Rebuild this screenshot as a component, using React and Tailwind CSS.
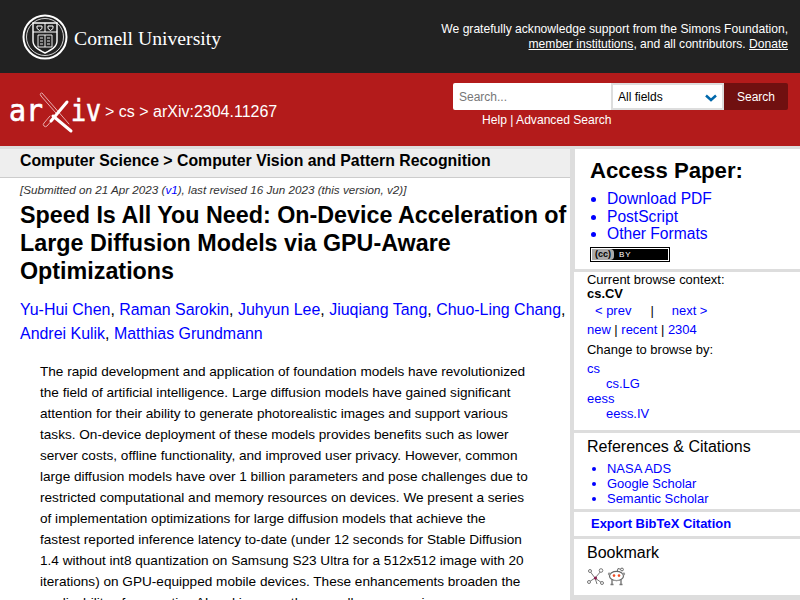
const SANS = { fontFamily: '"Liberation Sans", Arial, sans-serif' }

const AUTHORS = [
  'Yu-Hui Chen',
  'Raman Sarokin',
  'Juhyun Lee',
  'Jiuqiang Tang',
  'Chuo-Ling Chang',
  'Andrei Kulik',
  'Matthias Grundmann',
]

const ABSTRACT = [
  'The rapid development and application of foundation models have revolutionized',
  'the field of artificial intelligence. Large diffusion models have gained significant',
  'attention for their ability to generate photorealistic images and support various',
  'tasks. On-device deployment of these models provides benefits such as lower',
  'server costs, offline functionality, and improved user privacy. However, common',
  'large diffusion models have over 1 billion parameters and pose challenges due to',
  'restricted computational and memory resources on devices. We present a series',
  'of implementation optimizations for large diffusion models that achieve the',
  'fastest reported inference latency to-date (under 12 seconds for Stable Diffusion',
  '1.4 without int8 quantization on Samsung S23 Ultra for a 512x512 image with 20',
  'iterations) on GPU-equipped mobile devices. These enhancements broaden the',
  'applicability of generative AI and improve the overall user experience',
]

function CornellSeal() {
  return (
    <svg width="46" height="46" viewBox="0 0 46 46" fill="none" stroke="#fff">
      <circle cx="23" cy="23" r="21.5" strokeWidth="2" />
      <circle cx="23" cy="23" r="18.5" strokeWidth="0.8" />
      <path d="M11 9h24v18c0 6-6 9-12 12-6-3-12-6-12-12z" strokeWidth="1.4" />
      <path d="M11 18h24M23 9v9" strokeWidth="1" />
      <path d="M15 12h5v2.5l-2.5 2-2.5-2zM26 12h5v2.5l-2.5 2-2.5-2z" strokeWidth="1" />
      <path d="M16 21h14v12h-14zM23 21v12M18 24h3M18 27h3M18 30h3M25 24h3M25 27h3M25 30h3" strokeWidth="0.9" />
    </svg>
  )
}

function ArxivLogo() {
  return (
    <svg width="108" height="44" viewBox="0 0 108 44">
      <g fill="none" strokeLinecap="round">
        <path d="M42 3l27 31" strokeWidth="1" stroke="#e8b0b0" />
        <path d="M41 6l15 17" strokeWidth="1" stroke="#e8b0b0" />
        <path d="M41 3a2 2 0 0 0 0 3" strokeWidth="1" stroke="#e8b0b0" />
        <path d="M50 26l-6 7a2 2 0 0 0 3 3l7-8" strokeWidth="1" stroke="#e8b0b0" />
        <path d="M67 12l-16 19" strokeWidth="3" stroke="#fff" />
        <path d="M53 26l18 15" strokeWidth="3" stroke="#fff" />
      </g>
      <text x="9" y="31" textLength="34" lengthAdjust="spacingAndGlyphs" fontFamily="'DejaVu Sans Mono', monospace" fontSize="30" fill="#fff" stroke="#fff" strokeWidth="0.7">ar</text>
      <text x="71" y="31" textLength="30" lengthAdjust="spacingAndGlyphs" fontFamily="'DejaVu Sans Mono', monospace" fontSize="30" fill="#fff" stroke="#fff" strokeWidth="0.7">iv</text>
    </svg>
  )
}

function CcBadge() {
  return (
    <div className="mt-[4px] h-[15px] w-[80px] border border-black">
      <div className="flex h-full items-center border border-white bg-black">
        <span className="flex h-full w-[22px] items-center justify-center rounded-r-[4px] bg-[#aaa] text-[9px] leading-none font-bold text-black">(cc)</span>
        <span className="pl-[5px] text-[8px] leading-none tracking-[1px] text-white">BY</span>
      </div>
    </div>
  )
}

function BibsonomyIcon() {
  return (
    <svg width="17" height="17" viewBox="0 0 17 17" fill="none" stroke="#777" strokeWidth="1">
      <path d="M2 2l6 8 7 5M15 2l-7 8-6 4M8 10l2 6" />
      <circle cx="3" cy="3" r="1.5" fill="#fff" />
      <circle cx="14" cy="2.5" r="1.8" fill="#fff" />
      <circle cx="2" cy="14" r="1.5" fill="#fff" />
      <circle cx="15" cy="15" r="1.5" fill="#fff" />
      <circle cx="8.5" cy="10" r="1.6" fill="#8a2050" stroke="none" />
    </svg>
  )
}

function RedditIcon() {
  return (
    <svg width="19" height="19" viewBox="0 0 19 19" fill="none">
      <path d="M10 5l1-3.5 3.5 1" stroke="#666" strokeWidth="1" />
      <circle cx="15" cy="2.5" r="1.4" stroke="#666" fill="#fff" />
      <ellipse cx="9.5" cy="9" rx="7" ry="4.6" fill="#fff" stroke="#666" strokeWidth="1.2" />
      <circle cx="2.2" cy="7" r="1.4" fill="#999" />
      <circle cx="16.8" cy="7" r="1.4" fill="#999" />
      <circle cx="7" cy="8.6" r="1.3" fill="#f04a20" />
      <circle cx="12" cy="8.6" r="1.3" fill="#f04a20" />
      <path d="M5 13v4M14 13v4M3.5 17.5h3M12.5 17.5h3" stroke="#777" strokeWidth="1.4" />
      <path d="M6 13.5h7" stroke="#999" strokeWidth="1" />
    </svg>
  )
}

function Panel({ className = '', children }) {
  return <div className={`bg-white ${className}`}>{children}</div>
}

export default function App() {
  return (
    <div className="h-[600px] w-[800px] overflow-hidden bg-white text-black" style={SANS}>
      <header className="flex h-[73px] items-start justify-between bg-[#222] pr-[12px]">
        <div className="flex items-center pt-[14px] pl-[22px]">
          <CornellSeal />
          <span className="mt-[4px] ml-[6px] text-[19.7px] leading-none text-white" style={{ fontFamily: '"Liberation Serif", serif' }}>Cornell University</span>
        </div>
        <p className="pt-[22px] text-right text-[12.1px] leading-[15px] text-white">
          We gratefully acknowledge support from the Simons Foundation,<br />
          <a className="underline">member institutions</a>, and all contributors. <a className="underline">Donate</a>
        </p>
      </header>

      <div className="flex h-[73px] items-start justify-between bg-[#b31b1b] pr-[12px]">
        <div className="flex items-start pt-[17px]">
          <ArxivLogo />
          <span className="mt-[10px] ml-[-3px] text-[16px] leading-[24px] text-white">&gt; cs &gt; arXiv:2304.11267</span>
        </div>
        <div className="pt-[10px]">
          <div className="flex h-[27px]">
            <input placeholder="Search..." className="h-full w-[158px] rounded-l-[2px] bg-white pl-[6px] text-[12px] outline-none placeholder:text-[#777]" />
            <div className="relative h-full w-[113px]">
              <select className="h-full w-full appearance-none border-2 border-[#ddd] bg-white pl-[5px] text-[12px] text-black outline-none">
                <option>All fields</option>
              </select>
              <svg className="absolute top-[11px] right-[7px]" width="12" height="8" viewBox="0 0 12 8" fill="none" stroke="#0068ac" strokeWidth="2.5">
                <path d="M1 1.5l5 4.5 5-4.5" />
              </svg>
            </div>
            <button className="h-full w-[64px] rounded-r-[2px] bg-[#701010] text-[12px] text-white">Search</button>
          </div>
          <div className="mt-[3px] pl-[29px] text-[12.1px] leading-[14px] text-white">Help | Advanced Search</div>
        </div>
      </div>

      <div className="flex border-t-[3px] border-[#ddd]">
        <main className="w-[570px] shrink-0">
          <div className="h-[29px] border-b border-[#ccc] bg-[#eee] pl-[20px] text-[15.84px] leading-[24px] font-bold">
            Computer Science &gt; Computer Vision and Pattern Recognition
          </div>
          <p className="mt-[5px] pl-[20px] text-[11.67px] leading-[14px] text-[#333] italic">
            [Submitted on 21 Apr 2023 (<a className="text-[#00f]">v1</a>), last revised 16 Jun 2023 (this version, v2)]
          </p>
          <h1 className="mt-[4px] pl-[20px] text-[23.3px] leading-[28px] font-bold">
            Speed Is All You Need: On-Device Acceleration of<br />
            Large Diffusion Models via GPU-Aware<br />
            Optimizations
          </h1>
          <p className="mt-[13px] pl-[20px] text-[15.94px] leading-[24px] text-[#00f]">
            {AUTHORS.map((name, i) => (
              <span key={name}>
                <a>{name}</a>
                {i < AUTHORS.length - 1 && <span className="text-black">, </span>}
                {i === 4 && <br />}
              </span>
            ))}
          </p>
          <div className="mt-[15px] pl-[40px] text-[13.6px] leading-[21px]">
            {ABSTRACT.map((line) => (
              <div key={line} className="whitespace-nowrap">{line}</div>
            ))}
          </div>
        </main>

        <aside className="flex flex-1 flex-col gap-[3px] border-l-[4px] border-[#ddd] bg-[#ddd]">
          <Panel className="ml-px h-[120px] pt-[9px] pl-[15px]">
            <h2 className="text-[22.2px] leading-[26px] font-bold">Access Paper:</h2>
            <ul className="mt-[6px] list-disc pl-[17px] text-[15.6px] leading-[17.7px] text-[#00f]">
              <li><a>Download PDF</a></li>
              <li><a>PostScript</a></li>
              <li><a>Other Formats</a></li>
            </ul>
            <CcBadge />
          </Panel>
          <Panel className="h-[158px] pt-[1px] pl-[13px] text-[12.96px] leading-[14px]">
            <div>Current browse context:</div>
            <div className="font-bold">cs.CV</div>
            <div className="mt-[3px] flex text-[#00f]">
              <a className="ml-[8px]">&lt; prev</a>
              <span className="ml-[19px] text-black">|</span>
              <a className="ml-[18px]">next &gt;</a>
            </div>
            <div className="mt-[5px]">
              <a className="text-[#00f]">new</a> | <a className="text-[#00f]">recent</a> | <a className="text-[#00f]">2304</a>
            </div>
            <div className="mt-[6px]">Change to browse by:</div>
            <div className="mt-[4px] leading-[15px] text-[#00f]">
              <div>cs</div>
              <div className="pl-[19px]">cs.LG</div>
              <div>eess</div>
              <div className="pl-[19px]">eess.IV</div>
            </div>
          </Panel>
          <Panel className="h-[76px] pt-[4px] pl-[13px]">
            <h2 className="text-[16px] leading-[20px]">References &amp; Citations</h2>
            <ul className="mt-[4px] list-disc pl-[20px] text-[12.96px] leading-[15px] text-[#00f]">
              <li><a>NASA ADS</a></li>
              <li><a>Google Scholar</a></li>
              <li><a>Semantic Scholar</a></li>
            </ul>
          </Panel>
          <Panel className="h-[24px] pl-[17px] text-[12.96px] leading-[24px] font-bold text-[#00f]">
            <a>Export BibTeX Citation</a>
          </Panel>
          <Panel className="h-[56px] pt-[4px] pl-[13px]">
            <h2 className="text-[16px] leading-[20px]">Bookmark</h2>
            <div className="mt-[4px] flex items-center gap-[3px]">
              <BibsonomyIcon />
              <RedditIcon />
            </div>
          </Panel>
        </aside>
      </div>
    </div>
  )
}
